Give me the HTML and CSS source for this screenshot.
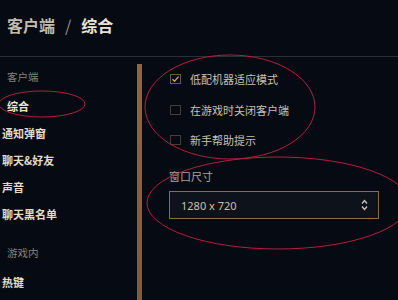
FILE: index.html
```html
<!DOCTYPE html>
<html lang="zh">
<head>
<meta charset="utf-8">
<link rel="stylesheet" href="styles.css">
</head>
<body>
<div class="page">
  <header class="header">
    <h1 class="title"><span class="crumb">客户端</span><span class="sep">/</span><span class="current">综合</span></h1>
  </header>
  <div class="main">
    <nav class="sidebar">
      <div class="section">客户端</div>
      <div class="item active">综合</div>
      <div class="item">通知弹窗</div>
      <div class="item">聊天&amp;好友</div>
      <div class="item">声音</div>
      <div class="item">聊天黑名单</div>
      <div class="section section-2">游戏内</div>
      <div class="item">热键</div>
    </nav>
    <div class="scrollbar"></div>
    <section class="content">
      <label class="check-row"><span class="box checked"><svg viewBox="0 0 11 10" width="11" height="10"><path d="M2.5 5.2 L4.6 7.3 L8.6 2.6" fill="none" stroke="#d0a35a" stroke-width="1.4"/></svg></span><span class="check-label">低配机器适应模式</span></label>
      <label class="check-row"><span class="box"></span><span class="check-label">在游戏时关闭客户端</span></label>
      <label class="check-row"><span class="box"></span><span class="check-label">新手帮助提示</span></label>
      <div class="field-label">窗口尺寸</div>
      <div class="select">
        <span class="select-value">1280 x 720</span>
        <svg class="spinner" viewBox="0 0 7 12" width="7" height="12"><path d="M1 4.5 L3.5 1.5 L6 4.5 M1 7.5 L3.5 10.5 L6 7.5" fill="none" stroke="#cfc8b8" stroke-width="1.3"/></svg>
      </div>
    </section>
  </div>
  <svg class="marks" viewBox="0 0 398 300" width="398" height="300">
    <ellipse cx="42" cy="104" rx="43" ry="13" fill="none" stroke="#b3203c" stroke-width="1"/>
    <ellipse cx="230" cy="107" rx="85" ry="52" fill="none" stroke="#b3203c" stroke-width="1"/>
    <ellipse cx="278" cy="203" rx="131" ry="46" fill="none" stroke="#b3203c" stroke-width="1"/>
  </svg>
</div>
</body>
</html>
```
FILE: styles.css
```css
html, body {
  margin: 0;
  padding: 0;
  background: #060a13;
}
body {
  font-family: "Noto Sans CJK SC", "Noto Sans", sans-serif;
  color: #c9c1b0;
  width: 398px;
  height: 300px;
  overflow: hidden;
}
.page {
  position: relative;
  width: 398px;
  height: 300px;
  overflow: hidden;
}
.header {
  height: 56px;
  border-bottom: 1px solid #2b2f37;
  box-sizing: content-box;
}
.title {
  margin: 0;
  padding: 13px 0 0 7px;
  font-size: 16px;
  line-height: 24px;
  font-weight: 700;
  display: flex;
  align-items: center;
}
.crumb { color: #c3bcab; }
.sep { color: #9a958b; margin: 0 10px; font-weight: 400; }
.current { color: #e9e3d3; }
.main {
  display: flex;
  height: 243px;
}
.sidebar {
  width: 137px;
  display: flex;
  flex-direction: column;
}
.section {
  font-size: 10.5px;
  line-height: 20px;
  color: #878379;
  padding-left: 7px;
  margin-top: 10px;
  margin-bottom: 6px;
}
.section-2 { margin-top: 14.5px; }
.item {
  font-size: 11px;
  line-height: 27px;
  font-weight: 700;
  color: #e4dcc6;
  padding-left: 2px;
}
.item.active { padding-left: 7px; color: #efe8d4; }
.scrollbar {
  width: 5px;
  margin-top: 7px;
  background: linear-gradient(to bottom, #8c6a3a, #7d5f34);
}
.content {
  flex: 1;
  padding: 7px 0 0 27px;
  display: flex;
  flex-direction: column;
}
.check-row {
  display: flex;
  align-items: center;
  height: 30.5px;
  gap: 9px;
  padding-left: 1px;
}
.box {
  width: 11px;
  height: 10px;
  box-sizing: border-box;
  border: 1px solid #463e30;
  position: relative;
  flex: none;
}
.box.checked { border-color: #6e5b36; }
.box svg { position: absolute; left: -1px; top: -1px; }
.check-label {
  font-size: 11px;
  line-height: 16px;
  color: #c8c1b1;
}
.field-label {
  margin-top: 12.5px;
  font-size: 11px;
  line-height: 16px;
  color: #aaa498;
}
.select {
  margin-top: 7px;
  width: 210px;
  height: 28px;
  box-sizing: border-box;
  border: 1px solid #86703f;
  background: #0e131b;
  display: flex;
  align-items: center;
  justify-content: space-between;
  padding: 0 10px 0 11px;
}
.select-value {
  font-family: "Noto Sans", "Noto Sans CJK SC", sans-serif;
  font-size: 11px;
  color: #c8c1b1;
}
.spinner { flex: none; }
.marks {
  position: absolute;
  left: 0;
  top: 0;
  pointer-events: none;
}
```
